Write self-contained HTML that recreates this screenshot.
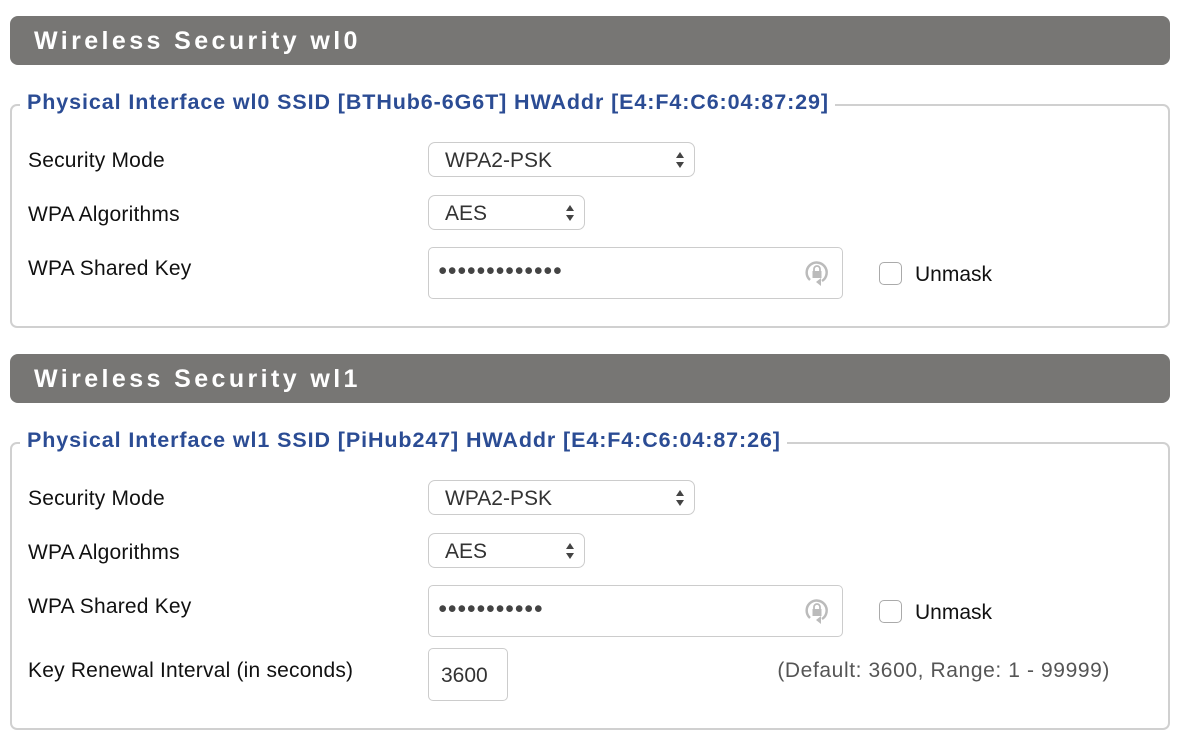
<!DOCTYPE html>
<html><head><meta charset="utf-8"><style>
*{box-sizing:border-box;margin:0;padding:0}
body{width:1182px;height:750px;background:#fff;font-family:"Liberation Sans",sans-serif;position:relative;overflow:hidden;color:#111}
.a{position:absolute}
.hd{left:10px;width:1160px;height:49px;background:#777674;border-radius:8px;color:#fff;font-weight:bold;font-size:25px;letter-spacing:3.4px;padding-left:24px;line-height:51px}
.fs{left:10px;width:1160px;border:2px solid #d0d0d0;border-radius:7px}
.lg{left:20px;background:#fff;padding:0 6px 0 7px;color:#2b4c94;font-weight:bold;font-size:21.5px;letter-spacing:0.9px;line-height:24px;white-space:nowrap}
.lb{left:28px;font-size:21px;letter-spacing:0.2px;line-height:24px}
.sel{left:428px;height:35px;border:1.5px solid #ccc;border-radius:7px;font-size:21px;color:#333;padding-left:16px;line-height:35px}
.arr{position:absolute;right:9px;top:8px;width:10px;height:18px}
.inp{left:428px;width:415px;height:52px;border:1.5px solid #ccc;border-radius:5px}
.dots{position:absolute;left:9px;top:14px;font-size:15.5px;letter-spacing:0.2px;color:#444}
.lock{position:absolute;left:375px;top:10px}
.cb{left:879px;width:23px;height:23px;border:1.5px solid #aaa;border-radius:5px}
.um{left:915px;font-size:21px;line-height:24px}
</style></head><body>

<div class="a hd" style="top:16px">Wireless Security wl0</div>
<div class="a fs" style="top:104px;height:224px"></div>
<div class="a lg" style="top:90px">Physical Interface wl0 SSID [BTHub6-6G6T] HWAddr [E4:F4:C6:04:87:29]</div>
<div class="a lb" style="top:149px">Security Mode</div>
<div class="a sel" style="top:142px;width:267px">WPA2-PSK<svg class="arr" viewBox="0 0 10 18"><path d="M5 1L9 7H1Z M5 17L9 11H1Z" fill="#444"/></svg></div>
<div class="a lb" style="top:203px">WPA Algorithms</div>
<div class="a sel" style="top:195px;width:157px">AES<svg class="arr" viewBox="0 0 10 18"><path d="M5 1L9 7H1Z M5 17L9 11H1Z" fill="#444"/></svg></div>
<div class="a lb" style="top:257px">WPA Shared Key</div>
<div class="a inp" style="top:247px"><span class="dots">●●●●●●●●●●●●●</span><svg class="lock" width="26" height="32" viewBox="0 0 26 32"><path d="M6 22A10 10 0 1 1 18 23" fill="none" stroke="#bbb" stroke-width="2.5"/><rect x="8.5" y="13" width="9" height="7" fill="#bbb"/><path d="M10 13V11a3 3 0 0 1 6 0v2" fill="none" stroke="#bbb" stroke-width="1.8"/><path d="M17 20l-5 4 5 4z" fill="#bbb"/></svg></div>
<div class="a cb" style="top:262px"></div>
<div class="a um" style="top:263px">Unmask</div>

<div class="a hd" style="top:354px">Wireless Security wl1</div>
<div class="a fs" style="top:442px;height:288px"></div>
<div class="a lg" style="top:428px">Physical Interface wl1 SSID [PiHub247] HWAddr [E4:F4:C6:04:87:26]</div>
<div class="a lb" style="top:487px">Security Mode</div>
<div class="a sel" style="top:480px;width:267px">WPA2-PSK<svg class="arr" viewBox="0 0 10 18"><path d="M5 1L9 7H1Z M5 17L9 11H1Z" fill="#444"/></svg></div>
<div class="a lb" style="top:541px">WPA Algorithms</div>
<div class="a sel" style="top:533px;width:157px">AES<svg class="arr" viewBox="0 0 10 18"><path d="M5 1L9 7H1Z M5 17L9 11H1Z" fill="#444"/></svg></div>
<div class="a lb" style="top:595px">WPA Shared Key</div>
<div class="a inp" style="top:585px"><span class="dots">●●●●●●●●●●●</span><svg class="lock" width="26" height="32" viewBox="0 0 26 32"><path d="M6 22A10 10 0 1 1 18 23" fill="none" stroke="#bbb" stroke-width="2.5"/><rect x="8.5" y="13" width="9" height="7" fill="#bbb"/><path d="M10 13V11a3 3 0 0 1 6 0v2" fill="none" stroke="#bbb" stroke-width="1.8"/><path d="M17 20l-5 4 5 4z" fill="#bbb"/></svg></div>
<div class="a cb" style="top:600px"></div>
<div class="a um" style="top:601px">Unmask</div>
<div class="a lb" style="top:659px">Key Renewal Interval (in seconds)</div>
<div class="a" style="left:428px;top:648px;width:80px;height:53px;border:1.5px solid #ccc;border-radius:5px;font-size:21px;color:#333;padding-left:12px;line-height:54px">3600</div>
<div class="a" style="left:700px;width:410px;top:659px;font-size:21px;letter-spacing:0.6px;color:#555;text-align:right;line-height:24px">(Default: 3600, Range: 1 - 99999)</div>
</body></html>
